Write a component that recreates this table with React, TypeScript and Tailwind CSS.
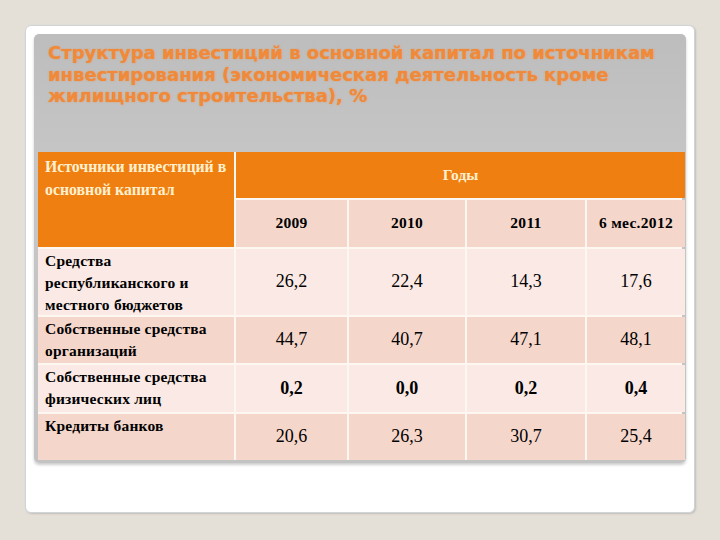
const years = ["2009", "2010", "2011", "6 мес.2012"];

const rows = [
  { name: "Средства республиканского и местного бюджетов", values: ["26,2", "22,4", "14,3", "17,6"], h: "h-[66px]", light: true, bold: false },
  { name: "Собственные средства организаций", values: ["44,7", "40,7", "47,1", "48,1"], h: "h-[46px]", light: false, bold: false },
  { name: "Собственные средства физических лиц", values: ["0,2", "0,0", "0,2", "0,4"], h: "h-[47px]", light: true, bold: true },
  { name: "Кредиты банков", values: ["20,6", "26,3", "30,7", "25,4"], h: "h-[46px]", light: false, bold: false },
];

const App = () => {
  return (
    <main className="w-[720px] h-[540px] bg-[#e4e0d7] pt-[25px] pl-[25px]">
      <div className="w-[670px] h-[488px] bg-white rounded-[6px] border border-[#cfd4d8] shadow-[1px_1px_2px_rgba(0,0,0,0.15)] p-[8px]">
        <div className="h-[429px] rounded-[5px] bg-[linear-gradient(to_bottom,#bdbdbd,#c6c6c6_30%,#c3c3c3)] shadow-[0_2px_3px_rgba(0,0,0,0.2)] pt-[8px] px-[4px]">
          <h1 className="pl-[10px] pr-[4px] text-[18px] leading-[21.5px] font-bold text-[#f08a3a] font-['DejaVu_Sans',sans-serif] [text-shadow:0_0_1.5px_rgba(240,138,58,0.8)]">
            Структура инвестиций в основной капитал по источникам инвестирования (экономическая деятельность кроме жилищного строительства), %
          </h1>

          <div className="mt-[45px] grid grid-cols-[196px_111px_116px_118px_98px] gap-[2px] bg-[#fdf7f2]">
            <div className="row-span-2 bg-[#ef7f10] pl-[7px] pr-[2px] pt-[3px] font-['Liberation_Serif',serif] text-[15.8px] leading-[23px] font-bold text-[#fff1d0]">
              Источники инвестиций в основной капитал
            </div>
            <div className="col-span-4 h-[46px] bg-[#ef7f10] flex items-center justify-center font-['Liberation_Serif',serif] text-[15.5px] font-bold text-[#fff1d0]">
              Годы
            </div>
            {years.map((y) => (
              <div key={y} className="h-[47px] bg-[#f5d6cb] flex items-center justify-center font-['Liberation_Serif',serif] text-[15.5px] font-bold text-black tracking-[0.3px]">
                {y}
              </div>
            ))}

            {rows.map((r) =>
              [
                <div
                  key={r.name}
                  className={`${r.h} ${r.light ? "bg-[#fae9e4]" : "bg-[#f5d6cb]"} px-[7px] pt-[1px] font-['Liberation_Serif',serif] text-[15.5px] leading-[22px] font-bold text-black tracking-[0.2px]`}
                >
                  {r.name}
                </div>,
                ...r.values.map((v, i) => (
                  <div
                    key={r.name + i}
                    className={`${r.h} ${r.light ? "bg-[#fae9e4]" : "bg-[#f5d6cb]"} flex items-center justify-center font-['Liberation_Serif',serif] text-[18px] text-black ${r.bold ? "font-bold" : ""}`}
                  >
                    {v}
                  </div>
                )),
              ]
            )}
          </div>
        </div>
      </div>
    </main>
  );
};

export default App;
